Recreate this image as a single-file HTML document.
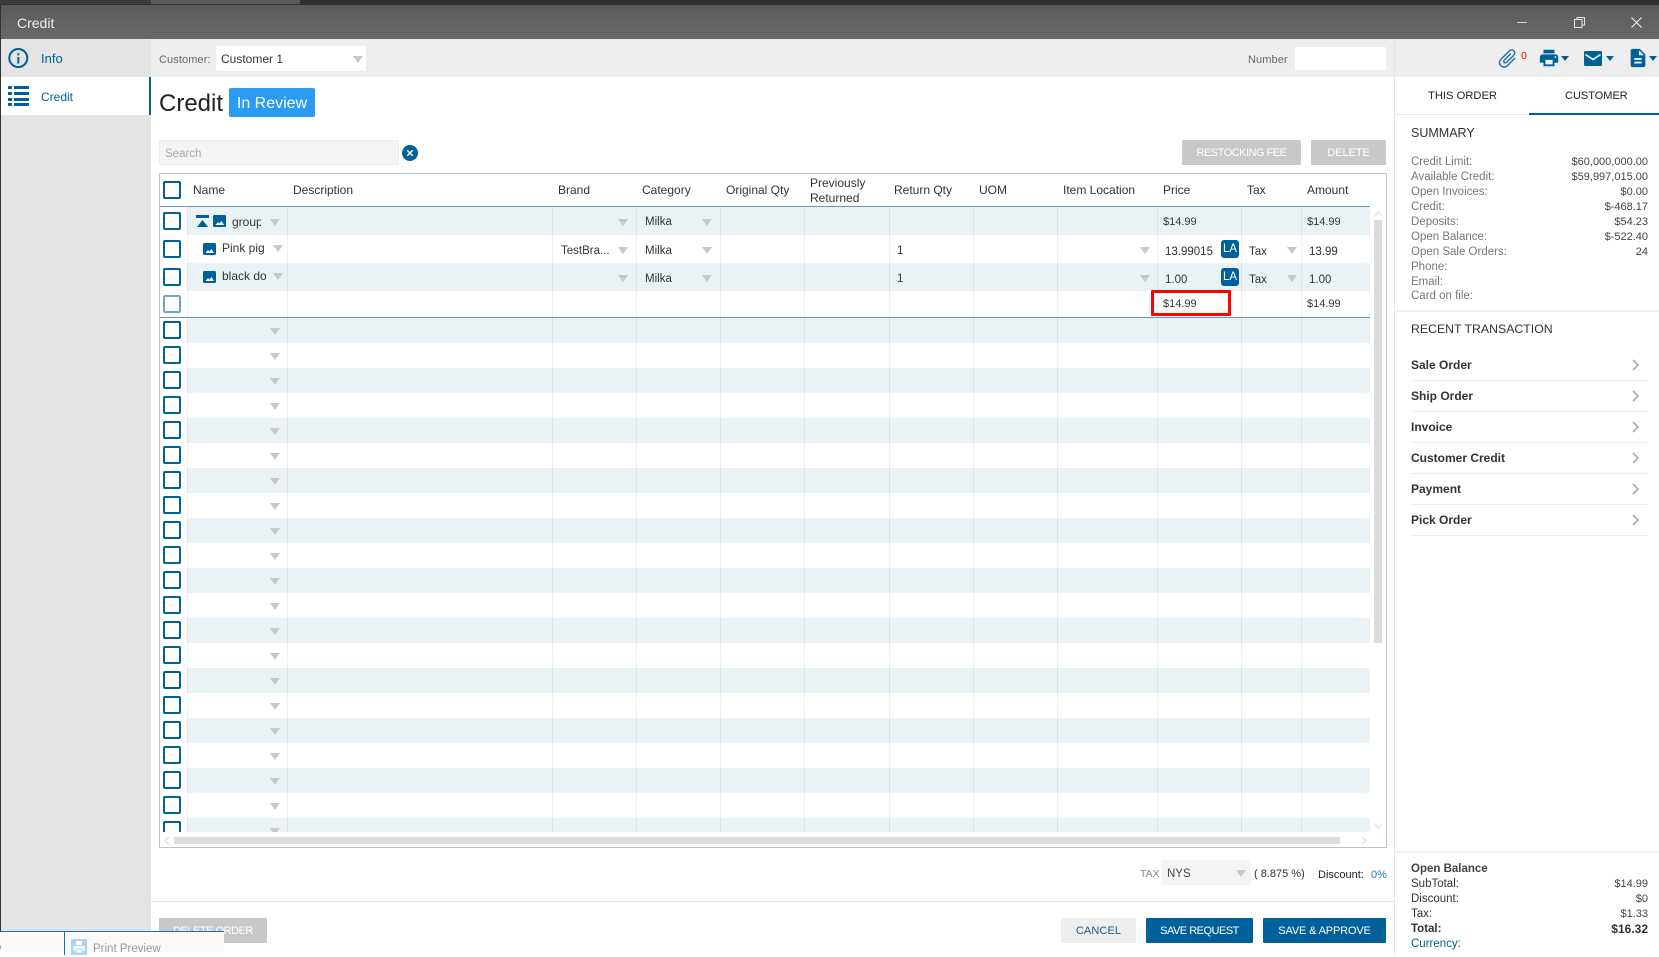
<!DOCTYPE html>
<html><head><meta charset="utf-8"><title>Credit</title>
<style>
html,body{margin:0;padding:0}
body{position:relative;width:1659px;height:955px;overflow:hidden;background:#fff;font-family:"Liberation Sans",sans-serif;font-size:12px;color:#333}
div,span.x{position:absolute}
.t{position:absolute;white-space:nowrap;line-height:16px;height:16px}
.r{position:absolute;white-space:nowrap;line-height:16px;height:16px;text-align:right;right:11px}
.ar{position:absolute;width:0;height:0;border-left:5px solid transparent;border-right:5px solid transparent;border-top:7px solid #c8c8c8}
.cb{position:absolute;left:163px;width:14px;height:14px;border:2px solid #00609a;border-radius:2px;background:#fff}
.vl{position:absolute;top:207px;height:625px;width:1px;background:rgba(70,90,110,.09)}
.h{top:182px;font-size:12px;color:#333}
.c{font-size:11.5px;color:#333}
.la{position:absolute;left:1221px;width:18px;height:18px;background:#00609a;border-radius:3px;color:#fff;font-size:11.5px;line-height:19px;text-align:center}
.btn{position:absolute;height:25px;line-height:27px;text-align:center;font-size:11px;color:#fff;border-radius:1px;white-space:nowrap;overflow:hidden}
.sl{left:1411px;font-size:11.5px;color:#777}
.sv{font-size:11px;color:#444}
.bl{left:1411px;font-size:11.5px;color:#333}
.li{left:1411px;font-size:12px;font-weight:bold;color:#333}
.sep{position:absolute;left:1411px;width:237px;height:1px;background:#eee}
svg{position:absolute;overflow:visible}
</style></head><body>

<!-- top strip -->
<div style="left:0;top:0;width:1659px;height:5px;background:#2f2f2f"></div>
<div style="left:151px;top:0;width:149px;height:4px;background:#5a5a5a"></div>
<div style="left:0;top:0;width:151px;height:4px;background:#3c3c3c"></div>
<!-- left edge -->
<div style="left:0;top:5px;width:1px;height:926px;background:#333"></div>
<!-- title bar -->
<div style="left:1px;top:5px;width:1658px;height:34px;background:linear-gradient(#5b5b5b,#696969)"></div>
<div class="t" style="left:17px;top:15px;color:#f0f0f0;font-size:14px">Credit</div>
<div style="left:1517px;top:22px;width:10px;height:1px;background:#d8d8d8"></div>
<svg style="left:1574px;top:17px" width="11" height="11" fill="none" stroke="#e4e4e4"><rect x=".5" y="2.5" width="7.5" height="8"/><path d="M3 2.5V.5h7.5v7.5H8"/></svg>
<svg style="left:1631px;top:17px" width="11" height="11" fill="none" stroke="#eee" stroke-width="1.1"><path d="M.5.5l10 10M10.5.5l-10 10"/></svg>

<!-- sidebar -->
<div style="left:1px;top:39px;width:150px;height:892px;background:#e4e4e4"></div>
<div style="left:1px;top:77px;width:150px;height:38px;background:#fff"></div>
<div style="left:149px;top:77px;width:2px;height:38px;background:#00609a"></div>
<svg style="left:8px;top:48px" width="21" height="21" viewBox="0 0 21 21"><circle cx="10.3" cy="10" r="9" fill="none" stroke="#00609a" stroke-width="2"/><rect x="9.3" y="9" width="2" height="6.5" fill="#00609a"/><rect x="9.3" y="5.3" width="2" height="2" fill="#00609a"/></svg>
<div class="t" style="left:41px;top:51px;color:#00609a;font-size:13px">Info</div>
<svg style="left:8px;top:86px" width="21" height="21" fill="#00609a"><rect x="0" y="0" width="4" height="3"/><rect x="6" y="0" width="15" height="3"/><rect x="0" y="6" width="4" height="3"/><rect x="6" y="6" width="15" height="3"/><rect x="0" y="12" width="4" height="3"/><rect x="6" y="12" width="15" height="3"/><rect x="0" y="17" width="4" height="3"/><rect x="6" y="17" width="15" height="3"/></svg>
<div class="t" style="left:41px;top:89px;color:#00609a;font-size:12px">Credit</div>

<!-- top bar -->
<div style="left:151px;top:39px;width:1508px;height:38px;background:#eee"></div>
<div class="t" style="left:159px;top:52px;font-size:11px;color:#666;letter-spacing:.1px">Customer:</div>
<div style="left:216px;top:46px;width:150px;height:25px;background:#fff;border-radius:2px"></div>
<div class="t" style="left:221px;top:51px;font-size:12px;color:#333">Customer 1</div>
<div class="ar" style="left:353px;top:56px"></div>
<div class="t" style="left:1248px;top:52px;font-size:11px;color:#666;letter-spacing:.1px">Number</div>
<div style="left:1295px;top:47px;width:91px;height:23px;background:#fff;border-radius:1px"></div>

<!-- right panel border -->
<div style="left:1394px;top:39px;width:1px;height:916px;background:#e4e4e4"></div>

<!-- toolbar icons -->
<svg style="left:1496px;top:47px" width="23" height="23" viewBox="0 0 24 24" fill="#1f6fa8"><path transform="rotate(45 12 12)" d="M16.5 6v11.5c0 2.21-1.79 4-4 4s-4-1.79-4-4V5c0-1.38 1.12-2.5 2.5-2.5s2.5 1.12 2.5 2.5v10.5c0 .55-.45 1-1 1s-1-.45-1-1V6H10v9.5c0 1.38 1.12 2.5 2.5 2.5s2.5-1.12 2.5-2.5V5c0-2.21-1.79-4-4-4S7 2.79 7 5v12.5c0 3.04 2.46 5.5 5.5 5.5s5.5-2.46 5.5-5.5V6h-1.5z"/></svg>
<div class="t" style="left:1521px;top:48px;font-size:10.5px;color:#e00">0</div>
<svg style="left:1538px;top:47px" width="22" height="22" viewBox="0 0 24 24" fill="#00609a"><path d="M19 8H5c-1.66 0-3 1.34-3 3v6h4v4h12v-4h4v-6c0-1.66-1.34-3-3-3zm-3 11H8v-5h8v5zm3-7c-.55 0-1-.45-1-1s.45-1 1-1 1 .45 1 1-.45 1-1 1zm-1-9H6v4h12V3z"/></svg>
<div style="left:1561px;top:56px;width:0;height:0;border-left:4px solid transparent;border-right:4px solid transparent;border-top:5px solid #00609a"></div>
<svg style="left:1584px;top:51px" width="18" height="15"><rect width="18" height="15" rx="1.5" fill="#00609a"/><path d="M1.5 3.5L9 8.5l7.5-5" fill="none" stroke="#fff" stroke-width="1.6"/></svg>
<div style="left:1606px;top:56px;width:0;height:0;border-left:4px solid transparent;border-right:4px solid transparent;border-top:5px solid #00609a"></div>
<svg style="left:1627px;top:47px" width="22" height="22" viewBox="0 0 24 24" fill="#00609a"><path d="M14 2H6c-1.1 0-2 .9-2 2v16c0 1.1.9 2 2 2h12c1.1 0 2-.9 2-2V8l-6-6zm2 16H8v-2h8v2zm0-4H8v-2h8v2zm-3-5V3.5L18.5 9H13z"/></svg>
<div style="left:1649px;top:56px;width:0;height:0;border-left:4px solid transparent;border-right:4px solid transparent;border-top:5px solid #00609a"></div>

<!-- heading -->
<div class="t" style="left:159px;top:89px;font-size:24px;line-height:30px;height:30px;color:#222">Credit</div>
<div style="left:229px;top:88px;width:86px;height:29px;background:#2a9bf5;border-radius:2px;color:#fff;font-size:16px;line-height:31px;text-align:center">In Review</div>

<!-- search -->
<div style="left:159px;top:140px;width:240px;height:25px;background:#f4f4f4;border-radius:2px;box-shadow:inset 0 0 0 1px #ececec"></div>
<div class="t" style="left:165px;top:146px;font-size:11.5px;color:#aaa">Search</div>
<svg style="left:402px;top:145px" width="16" height="16"><circle cx="8" cy="8" r="8" fill="#00609a"/><path d="M5.3 5.3l5.4 5.4M10.7 5.3l-5.4 5.4" stroke="#fff" stroke-width="1.4"/></svg>
<div class="btn" style="left:1182px;top:140px;width:119px;background:#c8c8c8;letter-spacing:-.5px">RESTOCKING FEE</div>
<div class="btn" style="left:1311px;top:140px;width:75px;background:#c8c8c8;letter-spacing:-.1px">DELETE</div>

<!-- grid -->
<div style="left:159px;top:173px;width:1226px;height:673px;border:1px solid #b4c4d4"></div>
<div style="left:187px;top:207px;width:1183px;height:28px;background:#ebf2f6"></div>
<div style="left:187px;top:263px;width:1183px;height:28px;background:#ebf2f6"></div>
<div style="left:187px;top:318px;width:1183px;height:514px;background:repeating-linear-gradient(#ebf2f6 0 25px,#fff 25px 50px)"></div>
<div style="left:160px;top:206px;width:1210px;height:1px;background:#6b95b8"></div>
<div style="left:160px;top:317px;width:1210px;height:1px;background:#6b95b8"></div>

<div class="vl" style="left:187px"></div><div class="vl" style="left:287px"></div><div class="vl" style="left:552px"></div><div class="vl" style="left:636px"></div><div class="vl" style="left:720px"></div><div class="vl" style="left:804px"></div><div class="vl" style="left:889px"></div><div class="vl" style="left:973px"></div><div class="vl" style="left:1057px"></div><div class="vl" style="left:1157px"></div><div class="vl" style="left:1241px"></div><div class="vl" style="left:1301px"></div>

<!-- header -->
<div class="cb" style="top:181px"></div>
<div class="t h" style="left:193px">Name</div>
<div class="t h" style="left:293px">Description</div>
<div class="t h" style="left:558px">Brand</div>
<div class="t h" style="left:642px">Category</div>
<div class="t h" style="left:726px">Original Qty</div>
<div class="t h" style="left:810px;top:176px;line-height:15px">Previously<br>Returned</div>
<div class="t h" style="left:894px">Return Qty</div>
<div class="t h" style="left:979px">UOM</div>
<div class="t h" style="left:1063px">Item Location</div>
<div class="t h" style="left:1163px">Price</div>
<div class="t h" style="left:1247px">Tax</div>
<div class="t h" style="left:1307px">Amount</div>

<!-- row 1 -->
<div class="cb" style="top:212px"></div>
<svg style="left:196px;top:215px" width="13" height="12" fill="#00609a"><rect width="13" height="3"/><path d="M6.5 5L12 12H1z"/></svg>
<svg style="left:213px;top:215px" width="13" height="12"><rect width="13" height="12" rx="1.5" fill="#00609a"/><path d="M2.5 10l2.5-3 1.5 1.5 2-2.5 2.5 4z" fill="#fff"/></svg>
<div class="t c" style="left:232px;top:214px;width:31px;overflow:hidden;font-size:12px"><span style="display:inline-block;width:29px;overflow:hidden">group</span></div>
<div class="ar" style="left:270px;top:219px"></div>
<div class="ar" style="left:618px;top:219px"></div>
<div class="t c" style="left:645px;top:214px">Milka</div>
<div class="ar" style="left:702px;top:219px"></div>
<div class="t c" style="left:1163px;top:214px;font-size:11px">$14.99</div>
<div class="t c" style="left:1307px;top:214px;font-size:11px">$14.99</div>

<!-- row 2 -->
<div class="cb" style="top:240px"></div>
<svg style="left:203px;top:243px" width="13" height="12"><rect width="13" height="12" rx="1.5" fill="#00609a"/><path d="M2.5 10l2.5-3 1.5 1.5 2-2.5 2.5 4z" fill="#fff"/></svg>
<div class="t c" style="left:222px;top:240px;width:43px;overflow:hidden;font-size:12px">Pink pig</div>
<div class="ar" style="left:273px;top:245px"></div>
<div class="t c" style="left:561px;top:243px">TestBra...</div>
<div class="ar" style="left:618px;top:247px"></div>
<div class="t c" style="left:645px;top:243px">Milka</div>
<div class="ar" style="left:702px;top:247px"></div>
<div class="t c" style="left:897px;top:243px">1</div>
<div class="ar" style="left:1140px;top:247px"></div>
<div class="t c" style="left:1165px;top:244px">13.99015</div>
<div class="la" style="top:240px">LA</div>
<div class="t c" style="left:1249px;top:244px">Tax</div>
<div class="ar" style="left:1287px;top:247px"></div>
<div class="t c" style="left:1309px;top:244px">13.99</div>

<!-- row 3 -->
<div class="cb" style="top:268px"></div>
<svg style="left:203px;top:271px" width="13" height="12"><rect width="13" height="12" rx="1.5" fill="#00609a"/><path d="M2.5 10l2.5-3 1.5 1.5 2-2.5 2.5 4z" fill="#fff"/></svg>
<div class="t c" style="left:222px;top:268px;width:44px;overflow:hidden;font-size:12px">black dog</div>
<div class="ar" style="left:273px;top:273px"></div>
<div class="ar" style="left:618px;top:275px"></div>
<div class="t c" style="left:645px;top:271px">Milka</div>
<div class="ar" style="left:702px;top:275px"></div>
<div class="t c" style="left:897px;top:271px">1</div>
<div class="ar" style="left:1140px;top:275px"></div>
<div class="t c" style="left:1165px;top:272px">1.00</div>
<div class="la" style="top:268px">LA</div>
<div class="t c" style="left:1249px;top:272px">Tax</div>
<div class="ar" style="left:1287px;top:275px"></div>
<div class="t c" style="left:1309px;top:272px">1.00</div>

<!-- row 4 -->
<div class="cb" style="top:295px;border-color:#6fa3c8"></div>
<div class="t c" style="left:1163px;top:296px;font-size:11px">$14.99</div>
<div class="t c" style="left:1307px;top:296px;font-size:11px">$14.99</div>
<div style="left:1151px;top:290px;width:74px;height:20px;border:3px solid #f00;border-radius:1px"></div>

<!-- empty rows -->
<div style="left:160px;top:318px;width:1210px;height:514px;overflow:hidden">
<div class="cb" style="left:3px;top:3px"></div><div class="ar" style="left:110px;top:10px"></div>
<div class="cb" style="left:3px;top:28px"></div><div class="ar" style="left:110px;top:35px"></div>
<div class="cb" style="left:3px;top:53px"></div><div class="ar" style="left:110px;top:60px"></div>
<div class="cb" style="left:3px;top:78px"></div><div class="ar" style="left:110px;top:85px"></div>
<div class="cb" style="left:3px;top:103px"></div><div class="ar" style="left:110px;top:110px"></div>
<div class="cb" style="left:3px;top:128px"></div><div class="ar" style="left:110px;top:135px"></div>
<div class="cb" style="left:3px;top:153px"></div><div class="ar" style="left:110px;top:160px"></div>
<div class="cb" style="left:3px;top:178px"></div><div class="ar" style="left:110px;top:185px"></div>
<div class="cb" style="left:3px;top:203px"></div><div class="ar" style="left:110px;top:210px"></div>
<div class="cb" style="left:3px;top:228px"></div><div class="ar" style="left:110px;top:235px"></div>
<div class="cb" style="left:3px;top:253px"></div><div class="ar" style="left:110px;top:260px"></div>
<div class="cb" style="left:3px;top:278px"></div><div class="ar" style="left:110px;top:285px"></div>
<div class="cb" style="left:3px;top:303px"></div><div class="ar" style="left:110px;top:310px"></div>
<div class="cb" style="left:3px;top:328px"></div><div class="ar" style="left:110px;top:335px"></div>
<div class="cb" style="left:3px;top:353px"></div><div class="ar" style="left:110px;top:360px"></div>
<div class="cb" style="left:3px;top:378px"></div><div class="ar" style="left:110px;top:385px"></div>
<div class="cb" style="left:3px;top:403px"></div><div class="ar" style="left:110px;top:410px"></div>
<div class="cb" style="left:3px;top:428px"></div><div class="ar" style="left:110px;top:435px"></div>
<div class="cb" style="left:3px;top:453px"></div><div class="ar" style="left:110px;top:460px"></div>
<div class="cb" style="left:3px;top:478px"></div><div class="ar" style="left:110px;top:485px"></div>
<div class="cb" style="left:3px;top:503px"></div><div class="ar" style="left:110px;top:510px"></div>
</div>

<!-- scrollbars -->
<div style="left:174px;top:837px;width:1166px;height:7px;background:#dcdcdc"></div>
<svg style="left:164px;top:836px" width="6" height="9" fill="none" stroke="#e2e2e2" stroke-width="1.2"><path d="M5 1L1 4.5 5 8"/></svg>
<svg style="left:1361px;top:836px" width="6" height="9" fill="none" stroke="#e2e2e2" stroke-width="1.2"><path d="M1 1l4 3.5L1 8"/></svg>
<div style="left:1374px;top:220px;width:8px;height:423px;background:#dcdcdc"></div>
<svg style="left:1374px;top:211px" width="9" height="6" fill="none" stroke="#e2e2e2" stroke-width="1.2"><path d="M1 5l3.5-4L8 5"/></svg>
<svg style="left:1374px;top:823px" width="9" height="6" fill="none" stroke="#e2e2e2" stroke-width="1.2"><path d="M1 1l3.5 4L8 1"/></svg>

<!-- tax row -->
<div class="t" style="left:1140px;top:866px;font-size:10.5px;color:#888">TAX</div>
<div style="left:1161px;top:860px;width:90px;height:25px;background:#f4f4f4;border-radius:2px"></div>
<div class="t" style="left:1167px;top:866px;font-size:11.5px;color:#444">NYS</div>
<div class="ar" style="left:1236px;top:870px"></div>
<div class="t" style="left:1254px;top:866px;font-size:11px;color:#333">( 8.875 %)</div>
<div class="t" style="left:1318px;top:867px;font-size:11px;color:#222">Discount:</div>
<div class="t" style="left:1371px;top:867px;font-size:11px;color:#1f78b4">0%</div>

<!-- footer -->
<div style="left:151px;top:901px;width:1243px;height:1px;background:#e2e2e2"></div>
<div class="btn" style="left:159px;top:918px;width:108px;background:#c8c8c8;letter-spacing:-.5px">DELETE ORDER</div>
<div class="btn" style="left:1061px;top:918px;width:75px;background:#eee;color:#1a5c86;letter-spacing:.1px">CANCEL</div>
<div class="btn" style="left:1146px;top:918px;width:107px;background:#00609a;letter-spacing:-.5px">SAVE REQUEST</div>
<div class="btn" style="left:1263px;top:918px;width:123px;background:#00609a;letter-spacing:-.15px">SAVE &amp; APPROVE</div>

<!-- tabs -->
<div style="left:1395px;top:114px;width:264px;height:1px;background:#e8e8e8"></div>
<div style="left:1529px;top:113px;width:130px;height:2px;background:#00609a"></div>
<div class="t" style="left:1428px;top:88px;font-size:11.2px;color:#222">THIS ORDER</div>
<div class="t" style="left:1565px;top:88px;font-size:11px;color:#222">CUSTOMER</div>

<!-- summary -->
<div class="t" style="left:1411px;top:125px;font-size:12.5px;color:#333">SUMMARY</div>
<div class="t sl" style="top:154px">Credit Limit:</div><div class="r sv" style="top:154px">$60,000,000.00</div>
<div class="t sl" style="top:169px">Available Credit:</div><div class="r sv" style="top:169px">$59,997,015.00</div>
<div class="t sl" style="top:184px">Open Invoices:</div><div class="r sv" style="top:184px">$0.00</div>
<div class="t sl" style="top:199px">Credit:</div><div class="r sv" style="top:199px">$-468.17</div>
<div class="t sl" style="top:214px">Deposits:</div><div class="r sv" style="top:214px">$54.23</div>
<div class="t sl" style="top:229px">Open Balance:</div><div class="r sv" style="top:229px">$-522.40</div>
<div class="t sl" style="top:244px">Open Sale Orders:</div><div class="r sv" style="top:244px">24</div>
<div class="t sl" style="top:259px">Phone:</div>
<div class="t sl" style="top:274px">Email:</div>
<div class="t sl" style="top:288px">Card on file:</div>
<div style="left:1395px;top:310px;width:264px;height:2px;background:#f0f0f0"></div>

<!-- recent transaction -->
<div class="t" style="left:1411px;top:321px;font-size:12.3px;color:#333">RECENT TRANSACTION</div>
<div class="t li" style="top:357px">Sale Order</div><div class="sep" style="top:380px"></div>
<div class="t li" style="top:388px">Ship Order</div><div class="sep" style="top:411px"></div>
<div class="t li" style="top:419px">Invoice</div><div class="sep" style="top:442px"></div>
<div class="t li" style="top:450px">Customer Credit</div><div class="sep" style="top:473px"></div>
<div class="t li" style="top:481px">Payment</div><div class="sep" style="top:504px"></div>
<div class="t li" style="top:512px">Pick Order</div><div class="sep" style="top:535px"></div>
<svg style="left:1632px;top:359px" width="7" height="12" fill="none" stroke="#aaa" stroke-width="1.6"><path d="M1 1l5 5-5 5"/></svg>
<svg style="left:1632px;top:390px" width="7" height="12" fill="none" stroke="#aaa" stroke-width="1.6"><path d="M1 1l5 5-5 5"/></svg>
<svg style="left:1632px;top:421px" width="7" height="12" fill="none" stroke="#aaa" stroke-width="1.6"><path d="M1 1l5 5-5 5"/></svg>
<svg style="left:1632px;top:452px" width="7" height="12" fill="none" stroke="#aaa" stroke-width="1.6"><path d="M1 1l5 5-5 5"/></svg>
<svg style="left:1632px;top:483px" width="7" height="12" fill="none" stroke="#aaa" stroke-width="1.6"><path d="M1 1l5 5-5 5"/></svg>
<svg style="left:1632px;top:514px" width="7" height="12" fill="none" stroke="#aaa" stroke-width="1.6"><path d="M1 1l5 5-5 5"/></svg>

<!-- bottom totals -->
<div style="left:1395px;top:851px;width:264px;height:2px;background:#f0f0f0"></div>
<div class="t bl" style="top:861px;font-weight:bold;color:#444">Open Balance</div>
<div class="t bl" style="top:876px">SubTotal:</div><div class="r sv" style="top:876px">$14.99</div>
<div class="t bl" style="top:891px">Discount:</div><div class="r sv" style="top:891px">$0</div>
<div class="t bl" style="top:906px">Tax:</div><div class="r sv" style="top:906px">$1.33</div>
<div class="t bl" style="top:921px;font-weight:bold">Total:</div><div class="r" style="top:921px;font-size:12px;font-weight:bold;color:#333">$16.32</div>
<div class="t bl" style="top:936px;color:#00609a">Currency:</div>

<!-- print preview overlay -->
<div style="left:0;top:931px;width:224px;height:24px;background:#fafafa"></div>
<div style="left:0;top:931px;width:224px;height:1px;background:#1a6fb5"></div>
<div style="left:64px;top:931px;width:1px;height:24px;background:#1a6fb5"></div>
<div class="t" style="left:-7px;top:941px;font-size:11.5px;color:#999">w</div>
<svg style="left:71px;top:939px" width="16" height="16"><rect width="16" height="16" rx="1" fill="#a9d5f2"/><rect x="5" y="2" width="6" height="4" fill="#fff"/><rect x="2.5" y="7" width="11" height="5" fill="#fff"/><rect x="4.5" y="10" width="7" height="4" fill="#e6f3fb" stroke="#a9d5f2" stroke-width=".6"/></svg>
<div class="t" style="left:93px;top:941px;font-size:11.5px;color:#999">Print Preview</div>

</body></html>
